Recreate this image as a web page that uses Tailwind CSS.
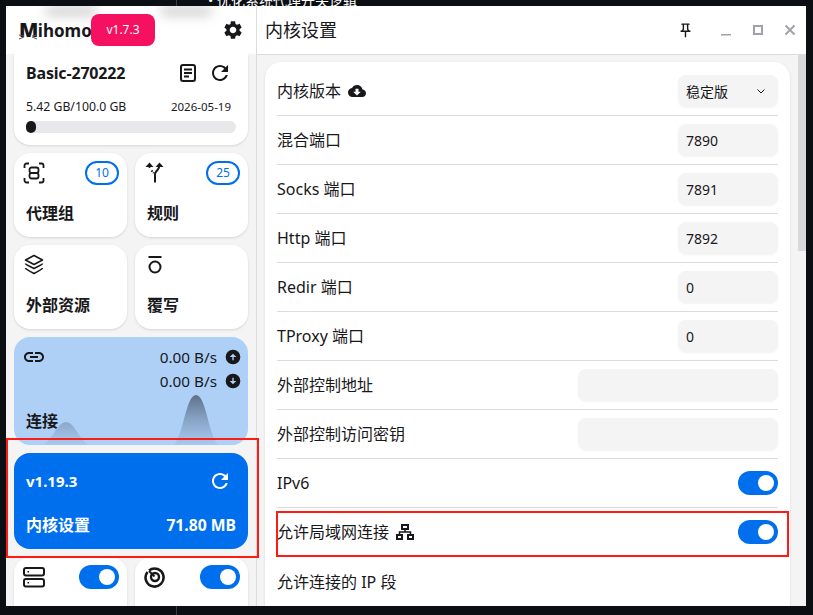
<!DOCTYPE html>
<html>
<head>
<meta charset="UTF-8">
<title>Mihomo Party</title>
<script src="https://cdn.jsdelivr.net/npm/@tailwindcss/browser@4"></script>
</head>
<body class="relative w-[813px] h-[615px] overflow-hidden bg-[#0b0f14] font-['Noto_Sans','Noto_Sans_CJK_SC',sans-serif] text-[#18181b]">
  <!-- desktop behind the window -->
  <div class="absolute left-[176px] top-0 w-px h-full bg-[#3a3d42]"></div>
  <div class="absolute left-[208px] -top-[9px] text-[14px] text-white leading-5">• 优化系统代理开关逻辑</div>

  <!-- app window -->
  <div class="absolute left-[6px] top-[6px] w-[800px] h-[600px] flex bg-[#f4f4f5] overflow-hidden">
    <!-- sidebar -->
    <div class="w-[251px] shrink-0 flex flex-col border-r border-[#dcdcde]">
      <div class="h-[48px] shrink-0 bg-white flex items-center pl-[13px] pr-[12px] relative z-10">
        <div class="absolute left-[40px] top-0 w-[50px] h-[10px] bg-[#8a8a8a]/40 blur-[6px]"></div>
        <div class="absolute left-[155px] top-0 w-[50px] h-[10px] bg-[#8a8a8a]/40 blur-[6px]"></div>
        <div class="flex items-baseline font-bold leading-none relative -mt-[1px]">
          <span class="text-[20px] font-black tracking-[-0.5px]">M</span><span class="text-[17px]">ihomo</span>
          <svg class="absolute left-0 top-[9px]" width="20" height="13" viewBox="0 0 20 13" fill="none" stroke="#52525b" stroke-width="1"><path d="M0 6l5 1M0 10l5-2M13 7l5-1M13 8l5 2"/></svg>
        </div>
        <div class="absolute left-[85px] top-[8px] w-[64px] h-[32px] rounded-lg bg-[#f5115f] text-white text-[12px] flex items-center justify-center">v1.7.3</div>
        <svg class="ml-auto" width="22" height="22" viewBox="0 0 24 24" fill="#18181b"><path d="M19.14 12.94c.04-.3.06-.61.06-.94 0-.32-.02-.64-.07-.94l2.03-1.58c.18-.14.23-.41.12-.61l-1.92-3.32c-.12-.22-.37-.29-.59-.22l-2.39.96c-.5-.38-1.03-.7-1.62-.94l-.36-2.54c-.04-.24-.24-.41-.48-.41h-3.84c-.24 0-.43.17-.47.41l-.36 2.54c-.59.24-1.13.57-1.62.94l-2.39-.96c-.22-.08-.47 0-.59.22L2.74 8.87c-.12.21-.08.47.12.61l2.03 1.58c-.05.3-.09.63-.09.94s.02.64.07.94l-2.03 1.58c-.18.14-.23.41-.12.61l1.92 3.32c.12.22.37.29.59.22l2.39-.96c.5.38 1.03.7 1.62.94l.36 2.54c.05.24.24.41.48.41h3.84c.24 0 .44-.17.47-.41l.36-2.54c.59-.24 1.13-.56 1.62-.94l2.39.96c.22.08.47 0 .59-.22l1.92-3.32c.12-.22.07-.47-.12-.61l-2.01-1.58zM12 15.6c-1.98 0-3.6-1.62-3.6-3.6s1.62-3.6 3.6-3.6 3.6 1.62 3.6 3.6-1.62 3.6-3.6 3.6z"/></svg>
      </div>

      <div class="flex-1 overflow-hidden px-[8px] flex flex-col gap-[8px]">
        <!-- profile card -->
        <div class="h-[91px] shrink-0 rounded-b-2xl bg-white shadow-sm px-3 flex flex-col">
          <div class="flex items-center h-[38px]">
            <span class="text-[16px] font-bold leading-none tracking-[-0.17px]">Basic-270222</span>
            <svg class="ml-auto" width="24" height="24" viewBox="0 0 24 24" fill="none" stroke="#18181b" stroke-width="2"><rect x="5" y="4" width="14" height="16" rx="2"/><path d="M8 8.500h8M8 12h8M8 15.500h5" stroke-width="1.800"/></svg>
            <svg class="ml-[8px] mr-[4px]" width="24" height="24" viewBox="0 0 24 24" fill="#18181b"><path d="M17.650 6.350C16.200 4.900 14.210 4 12 4c-4.420 0-7.990 3.580-7.990 8s3.570 8 7.990 8c3.730 0 6.840-2.550 7.730-6h-2.080c-.82 2.330-3.040 4-5.650 4-3.310 0-6-2.690-6-6s2.690-6 6-6c1.660 0 3.140.69 4.220 1.780L13 11h7V4l-2.350 2.350z"/></svg>
          </div>
          <div class="flex justify-between leading-4 mt-[7px]"><span class="text-[12.25px]">5.42 GB/100.0 GB</span><span class="text-[11.5px] mr-[5px]">2026-05-19</span></div>
          <div class="h-[12px] rounded-full bg-[#e8e8ea] mt-[6px]"><div class="w-[10px] h-[12px] rounded-full bg-[#18181b]"></div></div>
        </div>

        <!-- nav grid -->
        <div class="grid grid-cols-2 gap-[8px] shrink-0">
          <div class="relative h-[84px] rounded-2xl bg-white shadow-sm">
            <svg class="absolute left-[9px] top-[9px]" width="22" height="22" viewBox="0 0 22 22" fill="none" stroke="#18181b" stroke-width="1.800"><path d="M1.500 6V3.500a2 2 0 0 1 2-2H6M16 1.500h2.500a2 2 0 0 1 2 2V6M20.500 16v2.500a2 2 0 0 1-2 2H16M6 20.500H3.500a2 2 0 0 1-2-2V16"/><rect x="6.500" y="5.500" width="9" height="5.500" rx="2"/><rect x="6.500" y="11" width="9" height="5.500" rx="2"/></svg>
            <div class="absolute right-[8px] top-[8px] w-[34px] h-[24px] rounded-full border-2 border-[#006fee] text-[#006fee] text-[12px] flex items-center justify-center">10</div>
            <div class="absolute left-[12px] bottom-[12px] text-[16px] font-bold leading-6">代理组</div>
          </div>
          <div class="relative h-[84px] rounded-2xl bg-white shadow-sm">
            <svg class="absolute left-[9px] top-[9px]" width="22" height="22" viewBox="0 0 22 22" fill="none" stroke="#18181b" stroke-width="2"><path d="M11 20.500V12c0-2.500 3.500-3.500 4.500-8"/><path d="M7.500 8.500l2.300 2.500" stroke-dasharray="1.500 1"/><path d="M5.500 3v3" stroke-width="1.600"/><path d="M5.500 .5L1.500 5h8zM15.500 .5L11.500 5h8z" fill="#18181b" stroke="none"/></svg>
            <div class="absolute right-[8px] top-[8px] w-[34px] h-[24px] rounded-full border-2 border-[#006fee] text-[#006fee] text-[12px] flex items-center justify-center">25</div>
            <div class="absolute left-[12px] bottom-[12px] text-[16px] font-bold leading-6">规则</div>
          </div>
          <div class="relative h-[84px] rounded-2xl bg-white shadow-sm">
            <svg class="absolute left-[9px] top-[9px]" width="22" height="22" viewBox="0 0 22 22" fill="none" stroke="#18181b" stroke-width="1.600"><path d="M11 1.500l8.500 4.500-8.500 4.500-8.500-4.500z" stroke-linejoin="round"/><path d="M2.500 9.500c0 1 8.500 5 8.500 5s8.500-4 8.500-5"/><path d="M2.500 14c0 1 8.500 5.500 8.500 5.500s8.500-4.500 8.500-5.500"/></svg>
            <div class="absolute left-[12px] bottom-[12px] text-[16px] font-bold leading-6">外部资源</div>
          </div>
          <div class="relative h-[84px] rounded-2xl bg-white shadow-sm">
            <svg class="absolute left-[9px] top-[9px]" width="22" height="22" viewBox="0 0 22 22" fill="none" stroke="#18181b" stroke-width="2"><path d="M4.500 3h13"/><circle cx="11" cy="13" r="5.500"/></svg>
            <div class="absolute left-[12px] bottom-[12px] text-[16px] font-bold leading-6">覆写</div>
          </div>
        </div>

        <!-- connections -->
        <div class="relative h-[108px] shrink-0 rounded-2xl bg-[#aed0f7] overflow-hidden">
          <svg class="absolute left-0 bottom-0" width="234" height="50" viewBox="0 0 234 50">
            <defs><linearGradient id="g" x1="0" y1="0" x2="0" y2="1"><stop offset="0" stop-color="#4f5f73" stop-opacity=".85"/><stop offset="1" stop-color="#6b86a8" stop-opacity=".1"/></linearGradient></defs>
            <path d="M30 50C40 42 44 27 52 27S64 42 74 50zM160 50C170 38 172 0 182 0S194 38 204 50z" fill="url(#g)"/>
          </svg>
          <svg class="absolute left-[8px] top-[8px]" width="24" height="24" viewBox="0 0 24 24" fill="#18181b"><path d="M3.900 12c0-1.710 1.390-3.100 3.100-3.100h4V7H7c-2.760 0-5 2.240-5 5s2.240 5 5 5h4v-1.900H7c-1.710 0-3.100-1.390-3.100-3.100zM8 13h8v-2H8v2zm9-6h-4v1.900h4c1.710 0 3.100 1.390 3.100 3.100s-1.390 3.100-3.100 3.100h-4V17h4c2.760 0 5-2.240 5-5s-2.240-5-5-5z"/></svg>
          <div class="absolute right-[7px] top-[10px] flex flex-col gap-[4px] text-[15.3px] leading-5">
            <div class="flex items-center justify-end gap-[8px]">0.00 B/s
              <svg width="16" height="16" viewBox="0 0 24 24" fill="#18181b" fill-rule="evenodd"><path d="M12 1a11 11 0 1 0 0 22 11 11 0 0 0 0-22zm1 11v5h-2v-5H7l5-5 5 5h-4z"/></svg>
            </div>
            <div class="flex items-center justify-end gap-[8px]">0.00 B/s
              <svg width="16" height="16" viewBox="0 0 24 24" fill="#18181b" fill-rule="evenodd"><path d="M12 1a11 11 0 1 0 0 22 11 11 0 0 0 0-22zm-1 11V7h2v5h4l-5 5-5-5h4z"/></svg>
            </div>
          </div>
          <div class="absolute left-[12px] bottom-[12px] text-[16px] font-bold leading-6">连接</div>
        </div>

        <!-- core card -->
        <div class="relative h-[96px] shrink-0 rounded-2xl bg-[#006fee] text-white">
          <div class="absolute left-[12px] top-[16px] text-[15px] font-bold leading-6">v1.19.3</div>
          <svg class="absolute right-[16px] top-[16px]" width="24" height="24" viewBox="0 0 24 24" fill="#fff"><path d="M17.650 6.350C16.200 4.900 14.210 4 12 4c-4.420 0-7.990 3.580-7.990 8s3.570 8 7.990 8c3.730 0 6.840-2.550 7.730-6h-2.080c-.82 2.330-3.040 4-5.650 4-3.310 0-6-2.690-6-6s2.690-6 6-6c1.660 0 3.140.69 4.220 1.780L13 11h7V4l-2.350 2.350z"/></svg>
          <div class="absolute left-[12px] bottom-[12px] text-[16px] font-bold leading-6">内核设置</div>
          <div class="absolute right-[12px] bottom-[12px] text-[15.7px] font-bold leading-6">71.80 MB</div>
        </div>

        <!-- sysproxy / tun -->
        <div class="grid grid-cols-2 gap-[8px] shrink-0">
          <div class="relative h-[84px] rounded-2xl bg-white shadow-sm">
            <svg class="absolute left-[8px] top-[8px]" width="24" height="24" viewBox="0 0 24 24" fill="none" stroke="#18181b" stroke-width="2"><rect x="2" y="3" width="20" height="7.500" rx="2"/><rect x="2" y="14" width="20" height="7.500" rx="2"/><path d="M5.500 6.700h1.500M5.500 17.700h1.500" stroke-width="1.500"/></svg>
            <div class="absolute right-[8px] top-[8px] w-[40px] h-[24px] rounded-full bg-[#006fee] flex items-center justify-end pr-[4px]"><div class="w-[16px] h-[16px] rounded-full bg-white"></div></div>
          </div>
          <div class="relative h-[84px] rounded-2xl bg-white shadow-sm">
            <svg class="absolute left-[9px] top-[9px]" width="22" height="22" viewBox="0 0 22 22" fill="none" stroke="#18181b"><path d="M5 4.500A9 9 0 1 1 3.500 6" stroke-width="2.600"/><circle cx="11" cy="11" r="4" stroke-width="2.400"/><path d="M5 5l5.500 5.500" stroke-width="2"/></svg>
            <div class="absolute right-[8px] top-[8px] w-[40px] h-[24px] rounded-full bg-[#006fee] flex items-center justify-end pr-[4px]"><div class="w-[16px] h-[16px] rounded-full bg-white"></div></div>
          </div>
        </div>
      </div>
    </div>

    <!-- main -->
    <div class="flex-1 min-w-0 flex flex-col">
      <div class="h-[49px] shrink-0 bg-white border-b border-[#dcdcde] flex items-center pl-[8px] pr-[10px]">
        <h1 class="text-[18px] leading-6 font-normal">内核设置</h1>
        <svg class="ml-auto" width="17" height="17" viewBox="0 0 24 24" fill="#18181b"><path d="M14 4v5c0 1.120.37 2.160 1 3H9c.65-.86 1-1.900 1-3V4h4m3-2H7c-.55 0-1 .45-1 1s.45 1 1 1h1v5c0 1.660-1.340 3-3 3v2h5.970v7l1 1 1-1v-7H19v-2c-1.660 0-3-1.340-3-3V4h1c.55 0 1-.45 1-1s-.45-1-1-1z"/></svg>
        <svg class="ml-[26px]" width="12" height="12" viewBox="0 0 12 12" fill="#a1a1aa"><rect x="1" y="10" width="10" height="1.500"/></svg>
        <svg class="ml-[20px]" width="12" height="12" viewBox="0 0 12 12" fill="none" stroke="#a1a1aa" stroke-width="2"><rect x="2" y="2" width="8" height="8"/></svg>
        <svg class="ml-[20px]" width="12" height="12" viewBox="0 0 12 12" fill="none" stroke="#a1a1aa" stroke-width="2"><path d="M1.500 1.500l9 9M10.500 1.500l-9 9"/></svg>
      </div>
      <div class="relative flex-1 overflow-hidden pl-[8px] pt-[7px]">
        <div class="absolute right-0 top-0 w-[8px] h-[196px] bg-[#d9d9db]"></div>
        <div class="w-[525px] rounded-t-2xl bg-white shadow-sm px-3 pt-[5px] text-[16px]">
          <div class="h-[49px] flex items-center justify-between border-b border-[#dcdcde]">
            <div class="flex items-center gap-[7px]">内核版本
              <svg width="18" height="18" viewBox="0 0 24 24" fill="#18181b"><path d="M19.350 10.040C18.670 6.590 15.640 4 12 4 9.110 4 6.600 5.640 5.350 8.040 2.340 8.360 0 10.910 0 14c0 3.310 2.690 6 6 6h13c2.760 0 5-2.240 5-5 0-2.640-2.050-4.780-4.650-4.960zM17 13l-5 5-5-5h3V9h4v4h3z"/></svg>
            </div>
            <div class="w-[100px] h-[32px] rounded-lg bg-[#f4f4f5] shadow-xs flex items-center justify-between px-[8px] text-[14px]">稳定版
              <svg class="mr-[3px]" width="12" height="12" viewBox="0 0 12 12" fill="none" stroke="#18181b" stroke-width="1"><path d="M2.500 4.500L6 8l3.500-3.500"/></svg>
            </div>
          </div>
          <div class="h-[49px] flex items-center justify-between border-b border-[#dcdcde]">混合端口<div class="w-[100px] h-[32px] rounded-lg bg-[#f4f4f5] shadow-xs flex items-center px-[8px] text-[14px]">7890</div></div>
          <div class="h-[49px] flex items-center justify-between border-b border-[#dcdcde]">Socks 端口<div class="w-[100px] h-[32px] rounded-lg bg-[#f4f4f5] shadow-xs flex items-center px-[8px] text-[14px]">7891</div></div>
          <div class="h-[49px] flex items-center justify-between border-b border-[#dcdcde]">Http 端口<div class="w-[100px] h-[32px] rounded-lg bg-[#f4f4f5] shadow-xs flex items-center px-[8px] text-[14px]">7892</div></div>
          <div class="h-[49px] flex items-center justify-between border-b border-[#dcdcde]">Redir 端口<div class="w-[100px] h-[32px] rounded-lg bg-[#f4f4f5] shadow-xs flex items-center px-[8px] text-[14px]">0</div></div>
          <div class="h-[49px] flex items-center justify-between border-b border-[#dcdcde]">TProxy 端口<div class="w-[100px] h-[32px] rounded-lg bg-[#f4f4f5] shadow-xs flex items-center px-[8px] text-[14px]">0</div></div>
          <div class="h-[49px] flex items-center justify-between border-b border-[#dcdcde]">外部控制地址<div class="w-[200px] h-[32px] rounded-lg bg-[#f4f4f5] shadow-xs"></div></div>
          <div class="h-[49px] flex items-center justify-between border-b border-[#dcdcde]">外部控制访问密钥<div class="w-[200px] h-[32px] rounded-lg bg-[#f4f4f5] shadow-xs"></div></div>
          <div class="h-[49px] flex items-center justify-between border-b border-[#dcdcde]">IPv6<div class="w-[40px] h-[24px] rounded-full bg-[#006fee] flex items-center justify-end pr-[4px]"><div class="w-[16px] h-[16px] rounded-full bg-white"></div></div></div>
          <div class="h-[49px] flex items-center justify-between border-b border-[#dcdcde]">
            <div class="flex items-center gap-[6px]">允许局域网连接
              <svg width="20" height="18" viewBox="0 0 20 18" fill="none" stroke="#18181b" stroke-width="2"><rect x="7" y="2" width="6" height="4"/><path d="M10 6v3M4.500 12V9h11v3" stroke-width="1.500"/><rect x="2" y="12" width="5" height="4"/><rect x="13" y="12" width="5" height="4"/></svg>
            </div>
            <div class="w-[40px] h-[24px] rounded-full bg-[#006fee] flex items-center justify-end pr-[4px]"><div class="w-[16px] h-[16px] rounded-full bg-white"></div></div>
          </div>
          <div class="h-[49px] flex items-center justify-between">允许连接的 IP 段</div>
        </div>
      </div>
    </div>
  </div>

  <!-- red annotation boxes -->
  <div class="absolute left-[6px] top-[438px] w-[253px] h-[120px] border-2 border-[#ff1a12]"></div>
  <div class="absolute left-[276px] top-[511px] w-[513px] h-[46px] border-2 border-[#ff1a12]"></div>
</body>
</html>
